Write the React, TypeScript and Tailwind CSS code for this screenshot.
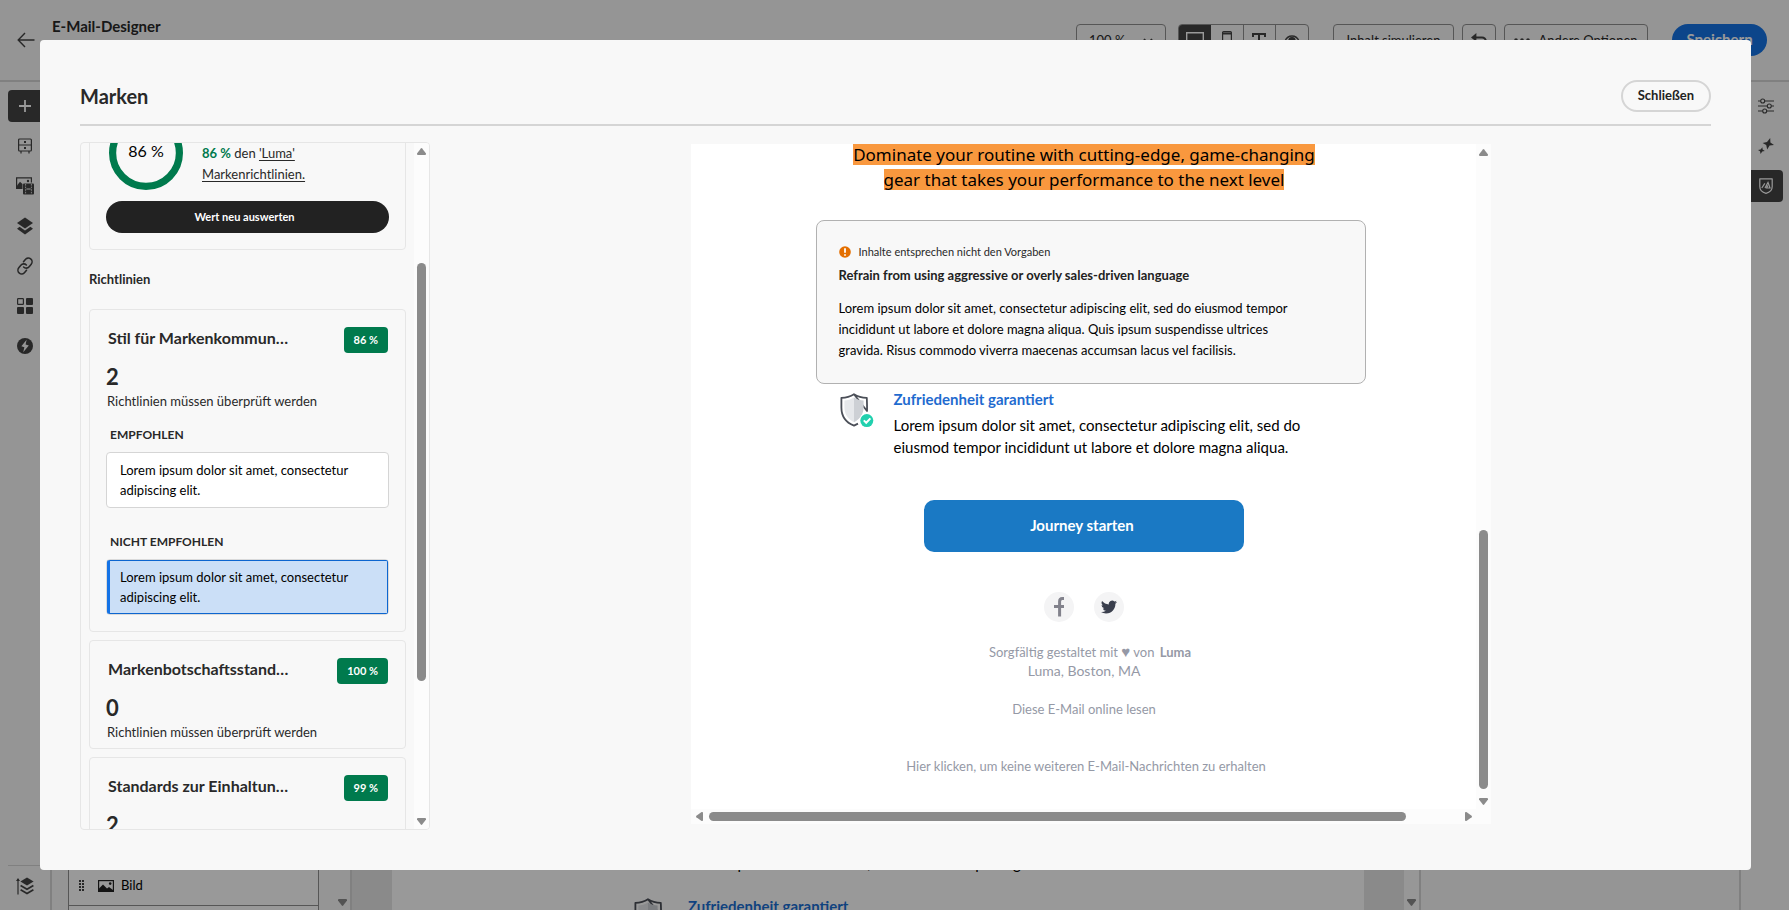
import React from 'react';

type IconProps = { className?: string };

const ArrowLeft = () => (
  <svg width="18" height="16" viewBox="0 0 18 16" fill="none" stroke="#444" strokeWidth="1.4">
    <path d="M17.5 8H1.5M8 1L1.2 8L8 15" />
  </svg>
);

const Plus = () => (
  <svg width="12" height="12" viewBox="0 0 12 12" stroke="#fff" strokeWidth="1.8">
    <path d="M6 0V12M0 6H12" />
  </svg>
);

const Drawer = () => (
  <svg width="16" height="16" viewBox="0 0 16 16" fill="none" stroke="#444" strokeWidth="1.2">
    <rect x="1.6" y="1" width="12.8" height="12" rx="1" />
    <path d="M1.6 7H14.4M4 13V15.6M12 13V15.6" />
    <path d="M7 4H9M7 10H9" strokeWidth="1.8" />
  </svg>
);

const Media = () => (
  <svg width="18" height="18" viewBox="0 0 18 18">
    <path d="M.6 12V.9H15.4V5.5" fill="none" stroke="#444" strokeWidth="1.2" />
    <path d="M1 12V8.5L4 4.8L6.5 7V12Z" fill="#444" />
    <circle cx="12" cy="4" r="1.2" fill="#444" />
    <rect x="7" y="6.4" width="11" height="11" rx="1" fill="#444" />
    <path d="M9.6 7V17M15.4 7V17" stroke="#f8f8f8" strokeWidth=".8" strokeDasharray="1.6 1" />
    <path d="M10.4 12H14.6" stroke="#f8f8f8" strokeWidth="1" />
  </svg>
);

const Layers = () => (
  <svg width="16" height="18" viewBox="0 0 16 18" fill="#444">
    <path d="M8 .5L16 6L8 11.5L0 6Z" />
    <path d="M2.6 9.8L0 11.8L8 17.5L16 11.8L13.4 9.8L8 13.6Z" />
  </svg>
);

const LinkIcon = () => (
  <svg width="18" height="18" viewBox="0 0 24 24" fill="none" stroke="#444" strokeWidth="2.1" strokeLinecap="round" className="-rotate-6">
    <path d="M10 13.2a5 5 0 0 0 7.4.4l3.1-3.1a5 5 0 0 0-7.1-7.1L10.6 6.2" />
    <path d="M14 10.8a5 5 0 0 0-7.4-.4l-3.1 3.1a5 5 0 0 0 7.1 7.1l2.8-2.8" />
  </svg>
);

const Grid = () => (
  <svg width="16" height="16" viewBox="0 0 16 16" fill="#444">
    <rect x=".6" y=".6" width="5.8" height="5.8" rx=".6" fill="none" stroke="#444" strokeWidth="1.2" />
    <rect x="9" y="0" width="7" height="7" rx="1" />
    <rect x="0" y="9" width="7" height="7" rx="1" />
    <rect x="9" y="9" width="7" height="7" rx="1" />
  </svg>
);

const Bolt = () => (
  <svg width="16" height="16" viewBox="0 0 16 16">
    <circle cx="8" cy="8" r="8" fill="#444" />
    <path d="M9.600 1.800L4.400 8.200L7.400 9.200L6.200 14.200L11.800 7.600L8.600 6.600Z" fill="#f8f8f8" />
  </svg>
);

const LayerTree = () => (
  <svg width="18" height="18" viewBox="0 0 18 18" fill="#444">
    <path d="M11 .5L17.600 4.400L11 8.400L4.400 4.400Z" />
    <path d="M4.600 8.400L11 12.200L17.400 8.400M4.600 12.800L11 16.600L17.400 12.800" fill="none" stroke="#444" strokeWidth="1.7" />
    <path d="M2 17.600V2" fill="none" stroke="#444" strokeWidth="1.2" />
    <path d="M0 4L2 1L4 4Z" />
  </svg>
);

const Sliders = () => (
  <svg width="16" height="16" viewBox="0 0 16 16" fill="none" stroke="#444" strokeWidth="1.1">
    <path d="M0 3H2.600M6.800 3H16M0 8H9.200M13.400 8H16M0 13H4.600M8.800 13H16" />
    <circle cx="4.7" cy="3" r="2" />
    <circle cx="11.3" cy="8" r="2" />
    <circle cx="6.7" cy="13" r="2" />
  </svg>
);

const Sparkles = () => (
  <svg width="16" height="16" viewBox="0 0 16 16" fill="#444">
    <path d="M12.200 0L12.400 4.400L16 7L11.600 7.600L9.200 11.400L8.200 7L4.600 5L9 4Z" />
    <path d="M4.400 9.200L4.600 11.600L6.800 13L4.200 13.600L2.600 16L2 13.200L0 12L2.600 11.400Z" />
  </svg>
);

const BrandShield = () => (
  <svg width="14" height="16" viewBox="0 0 14 16" fill="none" stroke="#fff" strokeWidth="1.2">
    <path d="M.8.8H13.2V8.6C13.2 12.4 10.4 14.6 7 15.4C3.6 14.6.8 12.4.8 8.6Z" strokeLinejoin="round" />
    <path d="M2.800 10L5.800 5.400M6 10L9 4.400L11 10H7.600L8.800 7.400" />
  </svg>
);

const Chevron = () => (
  <svg width="10" height="7" viewBox="0 0 10 7" fill="none" stroke="#444" strokeWidth="1.8">
    <path d="M1 1L5 5.400L9 1" />
  </svg>
);

const Desktop = () => (
  <svg width="18" height="16" viewBox="0 0 18 16" fill="none" stroke="#fff" strokeWidth="1.4">
    <path d="M.7 .7H17.3V12H.7ZM5 15H13" />
  </svg>
);

const Phone = () => (
  <svg width="10" height="18" viewBox="0 0 10 18" fill="none" stroke="#444" strokeWidth="1.2">
    <rect x=".6" y=".6" width="8.8" height="16.8" rx="1" />
    <path d="M.6 2.4H9.4" strokeWidth="2" />
  </svg>
);

const TextIcon = () => (
  <svg width="14" height="14" viewBox="0 0 14 14" fill="none" stroke="#444" strokeWidth="2">
    <path d="M1 4V1H13V4M7 1V13M4.500 13H9.500" />
  </svg>
);

const Eye = () => (
  <svg width="16" height="12" viewBox="0 0 16 12" fill="none" stroke="#444" strokeWidth="1.4">
    <path d="M1 6C4 -.6 12 -.6 15 6C12 12 4 12 1 6Z" />
    <circle cx="8" cy="5.6" r="3" fill="#444" />
  </svg>
);

const Undo = () => (
  <svg width="16" height="14" viewBox="0 0 16 14" fill="none" stroke="#444" strokeWidth="2">
    <path d="M3 4.400H11A3.800 3.800 0 0 1 11 12H8" />
    <path d="M5.400 0V8.800L0 4.400Z" fill="#444" stroke="none" />
  </svg>
);

const ImageIcon = () => (
  <svg width="16" height="12" viewBox="0 0 16 12">
    <rect x=".6" y=".6" width="14.8" height="10.8" fill="none" stroke="#222" strokeWidth="1.2" />
    <path d="M1 11V8.400L5 4.600L9 8.600L11 7L15 10V11Z" fill="#222" />
    <circle cx="12.2" cy="3.6" r="1.3" fill="#222" />
  </svg>
);

const DragDots = () => (
  <svg width="5" height="12" viewBox="0 0 5 12" fill="#444">
    {[0, 3, 6, 9].map((y) => (
      <g key={y}>
        <rect x="0" y={y} width="2" height="2" />
        <rect x="3" y={y} width="2" height="2" />
      </g>
    ))}
  </svg>
);

const Guarantee = ({ className }: IconProps) => (
  <svg width="34" height="35" viewBox="0 0 34 35" className={className}>
    <path d="M14 1.200C10.400 3.400 6 4.600 1.400 4.800V14.400C1.400 23 6.400 29.600 14 32.600L18 30.600M27 18C27.200 14 27 10 26.800 4.800C22 4.600 17.600 3.400 14 1.200Z" fill="none" stroke="#4b4f58" strokeWidth="1.8" strokeLinejoin="round" />
    <path d="M14 4.400C11 6.200 7.600 7.200 4.400 7.600V14.600C4.400 21 8 26.400 14 29.200Z" fill="#e6e8eb" />
    <path d="M14 4.400C17 6.200 20.400 7.200 23.600 7.600V14.600C23.600 21 20 26.400 14 29.200Z" fill="#cdd0d5" />
    <circle cx="26.8" cy="27.6" r="7.4" fill="#fff" />
    <circle cx="26.8" cy="27.6" r="6.5" fill="#21d0ae" />
    <path d="M23.800 27.400L26.200 29.800L30.400 25.400" fill="none" stroke="#fff" strokeWidth="2" />
  </svg>
);

const Facebook = () => (
  <svg width="10" height="20" viewBox="0 0 10 20" fill="none" stroke="#82828c" strokeWidth="3">
    <path d="M10 1.600H8.200C6.200 1.600 5.600 2.800 5.600 4.600V19.600M0 9.600H10" />
  </svg>
);

const Twitter = () => (
  <svg width="16" height="16" viewBox="0 0 24 24" fill="#3a3f4d">
    <path d="M23.95 4.57a10 10 0 0 1-2.82.77 4.96 4.96 0 0 0 2.16-2.72c-.95.55-2 .95-3.13 1.19a4.92 4.92 0 0 0-8.38 4.48C7.69 8.1 4.07 6.13 1.64 3.16a4.92 4.92 0 0 0 1.52 6.57 4.9 4.9 0 0 1-2.23-.61v.06a4.92 4.92 0 0 0 3.95 4.83 5 5 0 0 1-2.21.08 4.94 4.94 0 0 0 4.6 3.42A9.87 9.87 0 0 1 0 19.54a13.99 13.99 0 0 0 7.55 2.21c9.05 0 14-7.5 14-13.98 0-.21 0-.42-.02-.63a9.94 9.94 0 0 0 2.46-2.55z" />
  </svg>
);

const Alert = () => (
  <svg width="12" height="12" viewBox="0 0 12 12">
    <circle cx="6" cy="6" r="5.8" fill="#e46f00" />
    <path d="M6 2.200V6.800M6 8.200V9.800" stroke="#fff" strokeWidth="1.8" />
  </svg>
);

const turns = { up: '', down: 'rotate-180', left: '-rotate-90', right: 'rotate-90' };

function ScrollArrow({ dir }: { dir: keyof typeof turns }) {
  return (
    <svg width="9" height="7" viewBox="0 0 9 7" className={`shrink-0 fill-[#8b8b8b] ${turns[dir]}`}>
      <path d="M3.800 .4Q4.500 -.3 5.200 .4L9 5.600Q9.200 7 8 7H1Q-.2 7 0 5.600Z" />
    </svg>
  );
}

function Badge({ children }: { children: React.ReactNode }) {
  return (
    <span className="flex h-[26px] shrink-0 items-center rounded bg-[#007a4d] px-2.5 text-[11px] font-bold text-white">
      {children}
    </span>
  );
}

function GuidelineCard({ title, score, count, children }: { title: string; score: string; count: number; children?: React.ReactNode }) {
  return (
    <section className="rounded border border-[#e6e6e6] px-4 pt-[17px] pb-[7px] text-[#292929]">
      <div className="flex h-[26px] items-start justify-between pr-px pl-0.5">
        <h4 className="text-[16px] leading-[22px] font-bold">{title}</h4>
        <Badge>{score}</Badge>
      </div>
      <p className="mt-2 text-[22px] leading-[31px] font-bold">{count}</p>
      <p className="pl-px text-[13px] leading-[18px]">Richtlinien müssen überprüft werden</p>
      {children}
    </section>
  );
}

function LeftRail() {
  const icons = [Drawer, Media, Layers, LinkIcon, Grid, Bolt];
  const names = ['Komponenten', 'Assets', 'Ebenen', 'Links', 'Fragmente', 'Aktionen'];
  return (
    <nav className="flex w-[52px] shrink-0 flex-col border-r-2 border-[#d5d5d5] pt-2 pl-2">
      <button aria-label="Hinzufügen" className="flex h-8 w-12 items-center rounded bg-[#444] pl-[11px]">
        <Plus />
      </button>
      <div className="mt-1 flex w-[34px] flex-col">
        {icons.map((Icon, i) => (
          <button key={names[i]} aria-label={names[i]} className="flex h-10 items-center justify-center">
            <Icon />
          </button>
        ))}
      </div>
      <button aria-label="Navigationsbaum" className="mt-auto flex h-[45px] items-center border-t border-[#d5d5d5] pb-1 pl-2">
        <LayerTree />
      </button>
    </nav>
  );
}

function Editor() {
  return (
    <div aria-hidden="true" className="flex h-screen flex-col overflow-hidden bg-[#f8f8f8] text-[#292929]">
      <header className="flex h-[82px] shrink-0 items-start border-b-2 border-[#d5d5d5] pr-[22px] pl-[17px]">
        <button aria-label="Zurück" className="mt-8"><ArrowLeft /></button>
        <h1 className="mt-4 ml-[17px] text-[15px] leading-5 font-bold">E-Mail-Designer</h1>
        <div className="mt-6 ml-auto flex h-8 text-[13px]">
          <button className="flex w-[90px] items-center justify-between rounded border border-[#909090] px-3 pt-0.5">100 %<Chevron /></button>
          <div className="ml-3 flex w-[131px] overflow-hidden rounded border border-[#909090]">
            <button aria-label="Desktop" className="flex flex-1 items-center justify-center bg-[#444]"><Desktop /></button>
            <button aria-label="Mobil" className="flex flex-1 items-center justify-center"><Phone /></button>
            <button aria-label="Text" className="flex flex-1 items-center justify-center border-l border-[#909090]"><TextIcon /></button>
            <button aria-label="Vorschau" className="flex flex-1 items-center justify-center border-l border-[#909090] pt-0.5"><Eye /></button>
          </div>
          <button className="ml-6 w-[121px] rounded border border-[#909090] pt-0.5">Inhalt simulieren</button>
          <button aria-label="Rückgängig" className="ml-2 flex w-[34px] items-center justify-center rounded border border-[#909090]"><Undo /></button>
          <button className="ml-2 flex w-[144px] items-center justify-center gap-2 rounded border border-[#909090]">
            <svg width="16" height="4" viewBox="0 0 16 4" fill="#444"><circle cx="2" cy="2" r="1.8" /><circle cx="8" cy="2" r="1.8" /><circle cx="14" cy="2" r="1.8" /></svg>
            <span className="pt-0.5">Andere Optionen</span>
          </button>
          <button className="ml-6 w-[95px] rounded-full bg-[#1473e6] pb-0.5 text-[15px] font-bold text-white">Speichern</button>
        </div>
      </header>
      <div className="flex min-h-0 flex-1">
        <LeftRail />
        <div className="flex w-[300px] shrink-0 items-end border-r-2 border-[#d5d5d5] pl-4">
          <div className="w-[251px] border-x border-[#909090] bg-white">
            <div className="flex h-[50px] items-center border-b border-[#909090] pt-2.5 pl-2.5 text-[13px] text-black">
              <DragDots />
              <span className="mr-[7px] ml-3.5"><ImageIcon /></span>
              Bild
            </div>
            <div className="h-1" />
          </div>
          <span className="mb-1 ml-[19px] flex"><ScrollArrow dir="down" /></span>
        </div>
        <div className="flex min-w-0 flex-1 bg-[#e6e6e6] pl-10">
          <div className="flex min-w-0 flex-1 items-end overflow-hidden bg-white pl-[242px]">
            <div className="flex h-[58px] flex-col">
              <p className="pl-[55px] text-[15px] leading-[22px] text-black">Lorem ipsum dolor sit amet, consectetur adipiscing</p>
              <div className="mt-[22px] flex h-3.5 items-start">
                <Guarantee className="mt-0.5 shrink-0" />
                <p className="ml-5 shrink-0 text-[15px] leading-5 font-bold text-[#1a6fd4]">Zufriedenheit garantiert</p>
              </div>
            </div>
          </div>
          <div className="flex w-[55px] shrink-0 items-end justify-end">
            <div className="flex h-full w-[15px] items-end justify-center bg-[#fcfcfc] pb-1"><ScrollArrow dir="down" /></div>
          </div>
        </div>
        <div className="w-[322px] shrink-0 border-x-2 border-[#d5d5d5]" />
        <nav className="flex w-12 shrink-0 flex-col items-end">
          <button aria-label="Einstellungen" className="mt-1 flex h-10 w-[46px] items-center justify-center"><Sliders /></button>
          <button aria-label="KI-Assistent" className="flex h-10 w-[46px] items-center justify-center"><Sparkles /></button>
          <button aria-label="Marken" className="mt-1 mr-1.5 flex h-8 w-[42px] items-center justify-center rounded bg-[#444] pl-2"><BrandShield /></button>
        </nav>
      </div>
    </div>
  );
}

function BrandPanel() {
  return (
    <aside className="flex w-[350px] shrink-0 overflow-hidden rounded border border-[#e6e6e6]">
      <div className="min-w-0 flex-1 overflow-hidden px-2">
        <section className="-mt-11 rounded border border-[#e6e6e6] p-4">
          <div className="flex">
            <div className="ml-[3px] grid size-[74px] place-items-center text-[16px] text-black">
              <svg width="74" height="74" viewBox="0 0 74 74" className="col-start-1 row-start-1">
                <circle cx="37" cy="37" r="33.4" fill="none" stroke="#007a4d" strokeWidth="7.2" />
              </svg>
              <span className="col-start-1 row-start-1 pb-1">86 %</span>
            </div>
            <p className="ml-[19px] pt-[27px] text-[13px] leading-[21px] text-[#292929]">
              <span className="font-bold text-[#007a4d]">86 %</span> den{' '}
              <a href="#richtlinien" className="underline underline-offset-2">'Luma'<br />Markenrichtlinien.</a>
            </p>
          </div>
          <button className="mt-[11px] block h-8 w-full rounded-full bg-[#222] pr-1.5 text-[11px] font-bold text-white">Wert neu auswerten</button>
        </section>
        <h3 id="richtlinien" className="flex h-[59px] items-center text-[13px] font-bold text-[#292929]">Richtlinien</h3>
        <div className="flex flex-col gap-2">
          <GuidelineCard title="Stil für Markenkommun…" score="86 %" count={2}>
            <h5 className="mt-4 pl-1 text-[12px] leading-[18px] font-bold">EMPFOHLEN</h5>
            <p className="mt-2 rounded border border-[#d5d5d5] bg-white py-[7px] pr-4 pl-[13px] text-[13px] leading-5 text-black">
              Lorem ipsum dolor sit amet, consectetur adipiscing elit.
            </p>
            <h5 className="mt-[25px] pl-1 text-[12px] leading-[18px] font-bold">NICHT EMPFOHLEN</h5>
            <div className="mt-2 mb-[9px] rounded border border-[#dadada]">
              <p className="rounded-xs border border-l-[3px] border-[#0d66d0] border-l-[#1473e6] bg-[#cbdff7] py-1.5 pr-4 pl-2.5 text-[13px] leading-5 text-black">
                Lorem ipsum dolor sit amet, consectetur adipiscing elit.
              </p>
            </div>
          </GuidelineCard>
          <GuidelineCard title="Markenbotschaftsstand…" score="100 %" count={0} />
          <GuidelineCard title="Standards zur Einhaltun…" score="99 %" count={2} />
        </div>
      </div>
      <div className="flex w-[15px] shrink-0 flex-col items-center bg-[#fcfcfc] pt-[5px] pb-1">
        <ScrollArrow dir="up" />
        <div className="mt-[108px] h-[418px] w-[9px] rounded-full bg-[#8b8b8b]" />
        <span className="mt-auto flex"><ScrollArrow dir="down" /></span>
      </div>
    </aside>
  );
}

function Preview() {
  return (
    <div className="mt-0.5 mb-1.5 flex w-[800px] flex-col bg-white">
      <div className="flex min-h-0 flex-1">
        <div className="flex min-w-0 flex-1 flex-col items-center overflow-hidden pl-0.5">
          <h3 className="flex shrink-0 flex-col items-center gap-1 font-['Noto_Sans',sans-serif] text-[17px] leading-[21px] text-black">
            <span className="bg-[#f9983e]">Dominate your routine with cutting-edge, game-changing</span>
            <span className="bg-[#f9983e]">gear that takes your performance to the next level</span>
          </h3>
          <div className="mt-[30px] ml-[13px] w-[550px] shrink-0">
            <div className="rounded-lg border border-[#b1b1b1] bg-[#f8f8f8] px-[22px] py-[22px]">
              <p className="flex items-center gap-2 text-[11px] leading-[18px] text-[#292929]"><Alert />Inhalte entsprechen nicht den Vorgaben</p>
              <h4 className="mt-[5px] text-[13px] leading-[18px] font-bold text-[#222]">Refrain from using aggressive or overly sales-driven language</h4>
              <p className="mt-3.5 max-w-[460px] text-[13px] leading-[21px] text-black">
                Lorem ipsum dolor sit amet, consectetur adipiscing elit, sed do eiusmod tempor incididunt ut labore et dolore magna aliqua. Quis ipsum suspendisse ultrices gravida. Risus commodo viverra maecenas accumsan lacus vel facilisis.
              </p>
            </div>
            <div className="mt-[5px] flex pl-6">
              <Guarantee className="mt-1 shrink-0" />
              <div className="ml-5 max-w-[420px] text-[15px]">
                <h4 className="leading-5 font-bold text-[#1f6bcf]">Zufriedenheit garantiert</h4>
                <p className="mt-[5px] leading-[22px] text-black">Lorem ipsum dolor sit amet, consectetur adipiscing elit, sed do eiusmod tempor incididunt ut labore et dolore magna aliqua.</p>
              </div>
            </div>
          </div>
          <button className="mt-[42px] h-[52px] w-[320px] shrink-0 rounded-[10px] bg-[#1a79c4] pr-1 pb-0.5 text-[15px] font-bold text-white">Journey starten</button>
          <div className="mt-10 flex shrink-0 gap-5">
            <a href="#facebook" aria-label="Facebook" className="flex size-[30px] items-center justify-center rounded-full bg-[#f4f4f5]"><Facebook /></a>
            <a href="#twitter" aria-label="Twitter" className="flex size-[30px] items-center justify-center rounded-full bg-[#f4f4f5]"><Twitter /></a>
          </div>
          <footer className="mt-[21px] flex shrink-0 flex-col items-center text-[13px] leading-[19px] text-[#9599a6]">
            <p className="pl-3">Sorgfältig gestaltet mit <span className="text-[15px] leading-none">♥</span> von <b className="pl-0.5">Luma</b></p>
            <p className="text-[14px] leading-[18px]">Luma, Boston, MA</p>
            <a href="#online" className="mt-5">Diese E-Mail online lesen</a>
            <a href="#abmelden" className="mt-[38px] ml-1">Hier klicken, um keine weiteren E-Mail-Nachrichten zu erhalten</a>
          </footer>
        </div>
        <div className="flex w-[15px] shrink-0 flex-col items-center bg-[#fcfcfc] pt-[5px] pb-1">
          <ScrollArrow dir="up" />
          <div className="mt-auto h-[259px] w-[9px] rounded-full bg-[#8b8b8b]" />
          <span className="mt-[9px] flex"><ScrollArrow dir="down" /></span>
        </div>
      </div>
      <div className="flex h-[15px] shrink-0 items-center bg-[#fcfcfc] pr-[18px] pl-1">
        <ScrollArrow dir="left" />
        <div className="ml-[5px] h-[9px] w-[697px] rounded-full bg-[#8b8b8b]" />
        <span className="ml-auto flex"><ScrollArrow dir="right" /></span>
      </div>
    </div>
  );
}

export default function App() {
  return (
    <div className="font-[Lato,sans-serif]">
      <Editor />
      <div className="fixed inset-0 bg-black/40 py-10 pr-[38px] pl-10">
        <div role="dialog" aria-modal="true" aria-labelledby="dialog-title" className="flex h-full flex-col rounded bg-[#f8f8f8] p-10">
          <header className="flex shrink-0 items-center justify-between border-b-2 border-[#d5d5d5] pb-3">
            <h2 id="dialog-title" className="text-[20px] leading-8 font-bold text-[#292929]">Marken</h2>
            <button className="h-8 rounded-full border-2 border-[#d5d5d5] px-[15px] text-[13px] font-bold text-[#222]">Schließen</button>
          </header>
          <div className="mt-4 flex min-h-0 flex-1">
            <BrandPanel />
            <div className="flex min-w-0 flex-1 justify-center pl-10">
              <Preview />
            </div>
          </div>
        </div>
      </div>
    </div>
  );
}
